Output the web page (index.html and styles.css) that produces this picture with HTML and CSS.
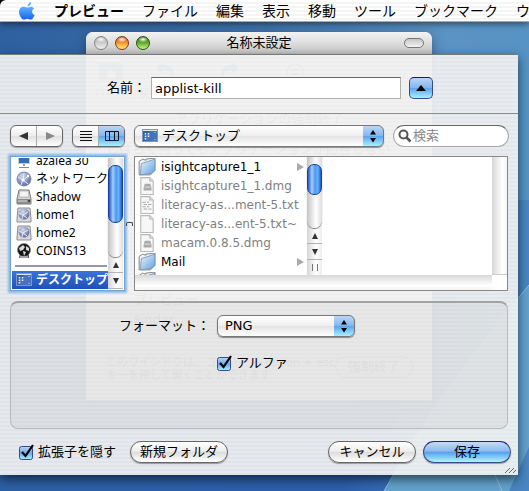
FILE: index.html
```
<!doctype html>
<html lang="ja">
  <head>
    <meta charset="UTF-8" />
    <meta name="viewport" content="width=device-width, initial-scale=1.0" />
    <title>名称未設定</title>
    <link rel="stylesheet" href="styles.css">
  </head>
  <body>
    <!-- shared icons -->
    <svg class="sprite" aria-hidden="true">
      <defs>
        <linearGradient id="g-folder" x1="0" y1="0" x2="1" y2="1">
          <stop offset="0" stop-color="#eef7ff" />
          <stop offset="1" stop-color="#5f9fdf" />
        </linearGradient>
        <linearGradient id="g-apple" x1="0" y1="0" x2="0" y2="1">
          <stop offset="0" stop-color="#63b4ff" />
          <stop offset="1" stop-color="#1464f0" />
        </linearGradient>
        <radialGradient id="g-globe" cx=".4" cy=".3" r=".8">
          <stop offset="0" stop-color="#d5dcf0" />
          <stop offset="1" stop-color="#4c5c90" />
        </radialGradient>
      </defs>
      <symbol id="i-globe" viewBox="0 0 16 16">
        <circle cx="8" cy="8" r="7" fill="url(#g-globe)" stroke="#8089a8" />
        <path d="M2 6l5 3 6-4M7 9l-2 5M7 9l5 4M8 2L7 9" stroke="#e8ecf8" fill="none" />
        <circle cx="7" cy="9" r="1.5" fill="#fff" />
        <circle cx="12" cy="5" r="1.2" fill="#fff" />
      </symbol>
      <symbol id="i-netdisk" viewBox="0 0 16 16">
        <path d="M2 1h12l1 11v3H1v-3z" fill="#d9d9dc" stroke="#8c8c90" />
        <circle cx="8" cy="7" r="5.5" fill="url(#g-globe)" />
        <path d="M3 6l4 2 5-3M7 8l-1 4M7 8l4 3" stroke="#e8ecf8" fill="none" />
      </symbol>
      <symbol id="i-disk" viewBox="0 0 16 16">
        <path d="M3 1h10l2 9v5H1v-5z" fill="#d4d4d4" stroke="#777" />
        <path d="M4 2h8l1 6H3z" fill="#f4f4f4" stroke="#aaa" stroke-width=".7" />
        <path d="M1 10h14v5H1z" fill="#8b8b8b" />
        <path d="M2 12h9" stroke="#ddd" />
        <rect x="12" y="11" width="2" height="2" fill="#444" />
      </symbol>
      <symbol id="i-coins" viewBox="0 0 16 16">
        <path d="M4 10h9v5H3z" fill="#555" />
        <circle cx="8" cy="7" r="6.5" fill="#161616" stroke="#777" stroke-width=".6" />
        <path d="M3 5l4-3 2 2-2 3-3 1zM10 3l3 2v3l-3-1zM7 8l3 1-2 4z" fill="#d8d8d8" />
        <path d="M4 14h8" stroke="#eee" />
      </symbol>
      <symbol id="i-imac" viewBox="0 0 16 16">
        <rect x="2.500" y="1.500" width="11" height="9" fill="#2f6fc0" stroke="#c9c9c9" />
        <path d="M3 3h10" stroke="#76a9e4" />
        <path d="M7 11h2v2H7z" fill="#999" />
        <path d="M3 14.500h10" stroke="#888" />
      </symbol>
      <symbol id="i-desktop" viewBox="0 0 16 14">
        <rect x=".5" y=".5" width="15" height="12" fill="#3560a8" stroke="#8397b8" />
        <path d="M1 10l8-9h6v11H6z" fill="#5583c4" opacity=".55" />
        <path d="M1 1.500h14" stroke="#dfe6f2" />
        <path d="M3.500 4v7M6.500 4v5" stroke="#e8eefa" stroke-width="1.500" stroke-dasharray="1.500 1" />
        <path d="M13 3v1M13 10v1" stroke="#c7d5ef" />
      </symbol>
      <symbol id="i-folder" viewBox="1 1 16 16">
        <path d="M2 4l3-2 3 1v-1l8-1v11l-4 4H2z" fill="#f2f2f2" stroke="#777" stroke-width=".8" />
        <path d="M4 6l12-4v10l-3 3-10 1z" fill="url(#g-folder)" stroke="#6f8fae" stroke-width=".7" />
      </symbol>
      <symbol id="i-file" viewBox="1 1 16 16">
        <path d="M3.500 1.500h8l3 3v12h-11z" fill="#f7f7f7" stroke="#b8b8b8" />
        <path d="M11.500 1.500v3h3" fill="#e2e2e2" stroke="#b8b8b8" />
      </symbol>
      <symbol id="i-text" viewBox="1 1 16 16">
        <path d="M3.500 1.500h8l3 3v12h-11z" fill="#f7f7f7" stroke="#b8b8b8" />
        <path d="M11.500 1.500v3h3" fill="#e2e2e2" stroke="#b8b8b8" />
        <path d="M5 6.500h6M6 8.500h7M5 10.500h6M6 12.500h7" stroke="#aaa" stroke-dasharray="3 1" />
      </symbol>
      <symbol id="i-dmg" viewBox="1 1 16 16">
        <path d="M3.500 1.500h8l3 3v12h-11z" fill="#f7f7f7" stroke="#b8b8b8" />
        <path d="M11.500 1.500v3h3" fill="#e2e2e2" stroke="#b8b8b8" />
        <path d="M7 7h5l1 4v2H6v-2z" fill="#aaa" />
        <path d="M7 10h5" stroke="#ddd" />
      </symbol>
    </svg>

    <div class="desktop">
      <svg class="wallpaper" viewBox="0 0 529 491" preserveAspectRatio="none" aria-hidden="true">
        <defs>
          <linearGradient id="g-sky" x1="0" y1="0" x2="1" y2="0">
            <stop offset="0" stop-color="#2e5f9f" />
            <stop offset=".5" stop-color="#3f74ad" />
            <stop offset=".85" stop-color="#5a93c4" />
            <stop offset="1" stop-color="#5793c4" />
          </linearGradient>
          <linearGradient id="g-low" x1="0" y1="0" x2="1" y2="0">
            <stop offset="0" stop-color="#2c5fa4" />
            <stop offset=".65" stop-color="#2c5fab" />
            <stop offset=".85" stop-color="#3d78b8" />
            <stop offset="1" stop-color="#4a86c2" />
          </linearGradient>
        </defs>
        <rect width="529" height="491" fill="url(#g-sky)" />
        <rect y="200" width="529" height="291" fill="url(#g-low)" />
        <path d="M384 491Q440 390 529 285V447L509 491z" fill="#62a2cd" />
        <path d="M384 491Q440 390 529 285M502 491l-9-20" fill="none" stroke="#8fbde0" />
        <rect width="6" height="6" />
      </svg>

      <nav class="menubar">
        <a class="menu-apple" href="#" aria-label="Apple">
          <svg width="18" height="20" viewBox="0 0 18 20">
            <path d="M9.500 5.500c.3-2.500 1.600-4 3.500-4.500.2 2.500-1.200 4.200-3.500 4.500z" fill="#63b4ff" />
            <path d="M9.200 6.500c1.200 0 2-.8 3.600-.8 1.400 0 2.500.7 3.200 1.700-2.800 1.700-2.400 5.400.6 6.600-.7 2-2.100 4.600-3.900 4.600-1.300 0-1.700-.8-3.300-.8s-2.100.8-3.300.8C3.900 18.600 1 14.300 1 10.900c0-3.300 2.100-5.100 4.300-5.100 1.600 0 2.600.7 3.900.7z" fill="url(#g-apple)" />
          </svg>
        </a>
        <a class="menu-app" href="#">プレビュー</a>
        <a href="#">ファイル</a>
        <a href="#">編集</a>
        <a href="#">表示</a>
        <a href="#">移動</a>
        <a href="#">ツール</a>
        <a href="#">ブックマーク</a>
        <a href="#">ウインドウ</a>
      </nav>

      <section class="window">
        <header class="titlebar">
          <span class="light"></span>
          <span class="light light-orange"></span>
          <span class="light light-green"></span>
          <h1>名称未設定</h1>
          <span class="pill"></span>
        </header>
        <div class="window-tools">
          <span class="tool"><svg width="28" height="28" viewBox="0 0 28 28"><path d="M2 5h24v18H2z" fill="#9ab" /><path d="M10 20c0-10 9-10 9 0z" fill="#fff" /></svg>パネル</span>
          <span class="tool"><svg width="28" height="28" viewBox="0 0 28 28"><path d="M10 4L3 10l7 6v-4c6 0 9 3 9 8 4-8 0-13-9-13z" fill="#789" /></svg>反時計回り</span>
          <span class="tool"><svg width="28" height="28" viewBox="0 0 28 28"><path d="M18 4l7 6-7 6v-4c-6 0-9 3-9 8-4-8 0-13 9-13z" fill="#789" /></svg>時計回り</span>
          <span class="tool"><svg width="28" height="28" viewBox="0 0 28 28"><circle cx="14" cy="14" r="8" fill="none" stroke="#aaa" stroke-width="2" /><path d="M10 12h8M10 16h8" stroke="#999" stroke-width="2" /></svg>実際のサイズ</span>
        </div>
        <div class="quit">
          <p class="quit-title">アプリケーションの強制終了</p>
          <p class="quit-note">しばらく待ってもアプリケーションが応答しない<br>場合は、強制終了してください。</p>
          <ul class="quit-apps">
            <li>プレビュー</li>
            <li>Finder</li>
          </ul>
          <div class="quit-foot">
            <p>このウインドウは、コマンド + option + esc<br>キーを押して開くことができます</p>
            <span class="quit-button">強制終了</span>
          </div>
        </div>
      </section>

      <form class="sheet">
        <div class="name-row">
          <label for="name">名前：</label>
          <input type="text" id="name" value="applist-kill" />
          <button type="button" class="square" aria-label="たたむ">
            <svg width="12" height="8" viewBox="0 0 12 8"><path d="M6 1l5 6H1z" /></svg>
          </button>
        </div>

        <div class="toolbar">
          <div class="segments">
            <button type="button" aria-label="戻る"><svg width="10" height="10" viewBox="0 0 10 10"><path d="M0 5l9-4v8z" fill="#333" /></svg></button>
            <button type="button" aria-label="進む"><svg width="10" height="10" viewBox="0 0 10 10"><path d="M10 5L1 1v8z" fill="#888" /></svg></button>
          </div>
          <div class="segments">
            <button type="button" aria-label="リスト"><svg width="12" height="12" viewBox="0 0 12 12"><path d="M0 1.500h12M0 4.500h12M0 7.500h12M0 10.500h12" stroke="#111" /></svg></button>
            <button type="button" class="on" aria-label="カラム"><svg width="14" height="12" viewBox="0 0 14 12"><path d="M.5 1.500h13v9H.5zM4.500 1v10M9.500 1v10" fill="none" stroke="#111" /></svg></button>
          </div>
          <div class="popup place">
            <svg class="popup-icon" width="16" height="14"><use href="#i-desktop" /></svg>
            <select aria-label="場所"><option>デスクトップ</option></select>
          </div>
          <label class="search">
            <svg width="14" height="14" viewBox="0 0 14 14"><circle cx="5.500" cy="5.500" r="4" fill="none" stroke="#555" stroke-width="2" /><path d="M8.500 8.500l4 4" stroke="#555" stroke-width="2.500" /></svg>
            <input type="search" placeholder="検索" aria-label="検索" />
          </label>
        </div>

        <div class="browser">
          <div class="sidebar">
            <div class="places">
              <button type="button"><svg width="16" height="16"><use href="#i-imac" /></svg>azalea 30</button>
              <button type="button"><svg width="16" height="16"><use href="#i-globe" /></svg>ネットワーク</button>
              <button type="button"><svg width="16" height="16"><use href="#i-disk" /></svg>Shadow</button>
              <button type="button"><svg width="16" height="16"><use href="#i-netdisk" /></svg>home1</button>
              <button type="button"><svg width="16" height="16"><use href="#i-netdisk" /></svg>home2</button>
              <button type="button"><svg width="16" height="16"><use href="#i-coins" /></svg>COINS13</button>
              <hr>
              <button type="button" class="selected"><svg width="16" height="14"><use href="#i-desktop" /></svg>デスクトップ</button>
            </div>
            <div class="scroll">
              <div class="track"><div class="thumb"></div></div>
              <button type="button" aria-label="上へ"><svg width="8" height="8" viewBox="0 0 8 8"><path d="M4 1l3 6H1z" /></svg></button>
              <button type="button" aria-label="下へ"><svg width="8" height="8" viewBox="0 0 8 8"><path d="M4 7l3-6H1z" /></svg></button>
            </div>
          </div>

          <div class="splitter"></div>

          <div class="columns">
            <div class="column">
              <div class="files">
                <button type="button"><svg width="18" height="18"><use href="#i-folder" /></svg>isightcapture1_1<i></i></button>
                <button type="button" disabled><svg width="18" height="18"><use href="#i-dmg" /></svg>isightcapture1_1.dmg</button>
                <button type="button" disabled><svg width="18" height="18"><use href="#i-text" /></svg>literacy-as...ment-5.txt</button>
                <button type="button" disabled><svg width="18" height="18"><use href="#i-file" /></svg>literacy-as...ent-5.txt~</button>
                <button type="button" disabled><svg width="18" height="18"><use href="#i-dmg" /></svg>macam.0.8.5.dmg</button>
                <button type="button"><svg width="18" height="18"><use href="#i-folder" /></svg>Mail<i></i></button>
                <button type="button" aria-label="フォルダ"><svg width="18" height="18"><use href="#i-folder" /></svg></button>
              </div>
              <div class="scroll">
                <div class="track"><div class="thumb"></div></div>
                <button type="button" aria-label="上へ"><svg width="8" height="8" viewBox="0 0 8 8"><path d="M4 1l3 6H1z" /></svg></button>
                <button type="button" aria-label="下へ"><svg width="8" height="8" viewBox="0 0 8 8"><path d="M4 7l3-6H1z" /></svg></button>
                <div class="grip"></div>
              </div>
            </div>
            <div class="empty"></div>
            <div class="vtrack"></div>
            <div class="htrack"></div>
            <div class="corner"></div>
          </div>
        </div>

        <div class="options">
          <label for="format">フォーマット：</label>
          <div class="popup">
            <select id="format"><option>PNG</option></select>
          </div>
          <label class="check alpha"><input type="checkbox" checked />アルファ</label>
        </div>

        <div class="actions">
          <label class="check"><input type="checkbox" checked />拡張子を隠す</label>
          <button type="button" class="push new-folder">新規フォルダ</button>
          <button type="button" class="push cancel">キャンセル</button>
          <button type="submit" class="push default">保存</button>
        </div>

        <svg class="resize" width="12" height="8" viewBox="0 0 12 8" aria-hidden="true">
          <path d="M0 6l5-5M4 6l5-5M8 6l3-3" stroke="#666" fill="none" />
        </svg>
      </form>
    </div>
  </body>
</html>
```
FILE: styles.css
```
* {
  box-sizing: border-box;
}
body {
  margin: 0;
  font-family: "DejaVu Sans", "Noto Sans CJK JP", sans-serif;
  font-size: 13px;
  line-height: 18px;
  color: #000;
}
p, ul, h1 {
  margin: 0;
  padding: 0;
  list-style: none;
}
button, input, select {
  font: inherit;
  color: inherit;
  margin: 0;
}
button {
  padding: 0;
  border: none;
  background: none;
}
svg {
  flex: none;
}
.sprite {
  display: block;
  width: 0;
  height: 0;
}
.desktop {
  position: relative;
  min-height: 100vh;
  padding: 0 11px 16px 0;
  overflow: hidden;
}
.wallpaper {
  position: absolute;
  inset: 0;
  width: 100%;
  height: 100%;
}

/* menu bar */
.menubar {
  position: relative;
  display: flex;
  align-items: center;
  gap: 18px;
  height: 22px;
  margin-right: -11px;
  padding-left: 18px;
  overflow: hidden;
  white-space: nowrap;
  font-size: 14px;
  background: repeating-linear-gradient(#fff 0 2px, #f5f5f5 2px 4px);
  border-bottom: 1px solid #a9a9a9;
  border-top-left-radius: 6px;
  box-shadow: 0 2px 6px rgba(0, 0, 0, 0.5);
}
.menubar a {
  color: #000;
  text-decoration: none;
}
.menubar svg {
  display: block;
}
.menu-app {
  font-weight: bold;
}

/* window behind the sheet */
.window {
  position: absolute;
  top: 32px;
  left: 86px;
  right: 97px;
  height: 368px;
  background: #f2f2f2;
  border-radius: 7px 7px 0 0;
  box-shadow: 0 4px 12px rgba(0, 0, 0, 0.35);
}
.titlebar {
  display: flex;
  align-items: center;
  gap: 7px;
  height: 22px;
  padding: 0 8px;
  border-radius: 7px 7px 0 0;
  background: linear-gradient(#f3f3f3, #d9d9d9 60%, #c4c4c4);
}
.titlebar h1 {
  flex: 1;
  font-size: 13px;
  font-weight: normal;
  text-align: center;
}
.light {
  width: 14px;
  height: 14px;
  border: 1px solid #858585;
  border-radius: 50%;
  background: radial-gradient(ellipse 5px 3px at 50% 20%, #fff, transparent), linear-gradient(#aaa, #f2f2f2);
}
.light-orange {
  border-color: #7c3a20;
  background: radial-gradient(ellipse 5px 3px at 50% 20%, #fff, transparent), linear-gradient(#b8481c, #f79a2c 50%, #ffee80);
}
.light-green {
  border-color: #2a5420;
  background: radial-gradient(ellipse 5px 3px at 50% 20%, #fff, transparent), linear-gradient(#2c6a18, #62b02c 50%, #cdf480);
}
.pill {
  width: 20px;
  height: 10px;
  margin-left: 36px;
  border: 1px solid #777;
  border-radius: 5px;
  background: linear-gradient(#c4c4c4, #f4f4f4);
}
.window-tools {
  display: flex;
  gap: 12px;
  height: 55px;
  padding: 4px 8px;
  color: #666;
  font-size: 11px;
  line-height: 16px;
}
.tool {
  display: flex;
  flex-direction: column;
  align-items: center;
}
.quit {
  height: 291px;
  padding: 0 20px;
  border-top: 1px solid #ddd;
  border-radius: 6px 6px 0 0;
  color: #666;
}
.quit-title {
  text-align: center;
}
.quit-note {
  padding-top: 12px;
  white-space: nowrap;
}
.quit-apps {
  height: 180px;
  padding: 114px 28px 0;
  line-height: 20px;
}
.quit-foot {
  display: flex;
  justify-content: space-between;
  font-size: 11px;
  line-height: 13px;
  white-space: nowrap;
}
.quit-button {
  height: 22px;
  padding: 3px 12px;
  border: 1px solid #888;
  border-radius: 11px;
  font-size: 13px;
}

/* save sheet */
.sheet {
  position: relative;
  margin-top: 32px;
  border-top: 1px solid #777;
  background:
    repeating-linear-gradient(rgba(255, 255, 255, 0.2) 0 2px, transparent 2px 4px),
    rgba(238, 238, 238, 0.93);
  box-shadow: 0 4px 10px rgba(0, 0, 0, 0.6);
}
.name-row {
  display: flex;
  align-items: center;
  padding: 22px 85px 14px 107px;
  border-bottom: 1px solid #8b8b8b;
}
.name-row input {
  flex: 1;
  min-width: 0;
  height: 22px;
  margin: 0 8px 0 5px;
  padding: 0 3px;
  border: 1px solid #b0b0b0;
  border-top-color: #666;
  background: #fff;
  outline: none;
}
.square {
  display: grid;
  place-items: center;
  width: 24px;
  height: 22px;
  border: 1px solid #3b4a86;
  border-top-color: #14147c;
  border-radius: 5px;
  background: linear-gradient(#bcd6f4, #86b6ee 48%, #5ea4ee 52%, #a8f0ff);
}
.toolbar {
  display: flex;
  gap: 9px;
  padding: 11px 9px 9px 10px;
}
.segments {
  display: flex;
  width: 53px;
  height: 22px;
  border: 1px solid #666;
  border-radius: 6px;
  overflow: hidden;
  background: linear-gradient(#fff, #eee 48%, #e0e0e0 52%, #fff);
  box-shadow: 0 1px 1px rgba(0, 0, 0, 0.3);
}
.segments button {
  flex: 1;
  display: grid;
  place-items: center;
}
.segments button + button {
  border-left: 1px solid #aaa;
}
.segments .on {
  background: linear-gradient(#bcd6f4, #86b6ee 48%, #5ea4ee 52%, #a8f0ff);
}
.popup {
  display: grid;
  align-items: center;
  height: 22px;
  border: 1px solid #777;
  border-radius: 6px;
  overflow: hidden;
  background:
    url("data:image/svg+xml,%3Csvg xmlns='http://www.w3.org/2000/svg' width='20' height='20'%3E%3Cpath d='M7 8.500l3-4.500 3 4.500zM7 12l3 4.500 3-4.500z'/%3E%3C/svg%3E") right center no-repeat,
    linear-gradient(#bcd6f4, #86b6ee 48%, #5ea4ee 52%, #a8f0ff) right / 20px 100% no-repeat,
    linear-gradient(#fff, #efefef 48%, #e4e4e4 52%, #fff);
  box-shadow: 0 1px 1px rgba(0, 0, 0, 0.4);
}
.popup select {
  grid-area: 1 / 1;
  width: 100%;
  height: 20px;
  padding: 0 24px 0 7px;
  border: none;
  background: none;
  appearance: none;
  outline: none;
}
.popup-icon {
  grid-area: 1 / 1;
  margin-left: 7px;
}
.place {
  flex: 1;
}
.place select {
  padding-left: 27px;
}
.search {
  display: flex;
  align-items: center;
  gap: 1px;
  width: 116px;
  height: 22px;
  padding: 0 4px;
  border: 1px solid #aaa;
  border-top-color: #666;
  border-radius: 11px;
  background: #fff;
}
.search input {
  flex: 1;
  min-width: 0;
  padding: 0;
  border: none;
  background: none;
  outline: none;
}
.search input::placeholder {
  color: #888;
}

/* file browser */
.browser {
  display: flex;
  height: 135px;
  padding: 0 10px;
}
.sidebar {
  display: flex;
  width: 115px;
  padding: 1px;
  background: #fff;
  border: 1px solid #6fa3d8;
  box-shadow: 0 0 2px 2px #8db9e6;
}
.places {
  flex: 1;
  display: flex;
  flex-direction: column;
  justify-content: flex-end;
  min-width: 0;
  overflow: hidden;
}
.places button {
  flex: none;
  display: flex;
  align-items: center;
  gap: 4px;
  height: 18px;
  padding-left: 4px;
  font-family: "Noto Sans", "Noto Sans CJK JP", sans-serif;
  font-size: 12px;
  white-space: nowrap;
}
.places hr {
  flex: none;
  width: 92px;
  height: 2px;
  margin: 5px 3px 4px;
  border: none;
  background: #999;
}
.places .selected {
  color: #fff;
  font-weight: bold;
  background: linear-gradient(#3b74d8, #1e50b8);
}
.scroll {
  display: flex;
  flex-direction: column;
  width: 15px;
  background: linear-gradient(90deg, #d6d6d6, #fff 60%, #eee);
}
.track {
  flex: 1;
  padding: 7px 0;
  border-radius: 0 0 8px 8px;
  background: linear-gradient(90deg, #c4c4c4, #fff 60%, #ddd);
  box-shadow: 0 1px 1px #777;
}
.thumb {
  height: 58px;
  border: 1px solid #1b3f9c;
  border-radius: 7px;
  background: linear-gradient(90deg, #1c55c8, #a4cdfa 30%, #4c98f0 55%, #66b4fa 75%, #1c55c8);
}
.scroll button {
  display: grid;
  place-items: center;
  height: 16px;
  border-bottom: 1px solid #b4b4b4;
  fill: #333;
}
.splitter {
  width: 9px;
  display: grid;
  place-items: center;
}
.splitter::before {
  content: "";
  width: 5px;
  height: 3px;
  border: 1px solid #444;
  border-bottom: none;
  border-radius: 2px 2px 0 0;
}
.columns {
  flex: 1;
  display: grid;
  grid-template: 1fr 15px / 187px 1fr 15px;
  min-width: 0;
  border: 1px solid #888;
  background: #fff;
}
.column {
  display: flex;
  height: 118px;
}
.files {
  flex: 1;
  min-width: 0;
  overflow: hidden;
}
.files button {
  display: flex;
  align-items: center;
  gap: 5px;
  width: 100%;
  height: 19px;
  padding: 0 3px;
  font-size: 12px;
  white-space: nowrap;
}
.files button:disabled {
  color: #808080;
}
.files i {
  margin-left: auto;
  border: 4px solid transparent;
  border-left: 7px solid #aaa;
  border-right: none;
}
.column .thumb {
  height: 31px;
}
.grip {
  height: 15px;
  padding: 4px 5px;
}
.grip::before {
  content: "";
  display: block;
  width: 4px;
  height: 7px;
  border: 1px solid #777;
  border-width: 0 1px;
}
.vtrack {
  border-bottom: 1px solid #ccc;
  background: linear-gradient(90deg, #d8d8d8, #fff 70%, #f4f4f4);
}
.htrack {
  grid-column: 1 / 3;
  background: linear-gradient(#d8d8d8, #fff 70%, #f4f4f4);
}

/* options and buttons */
.options {
  display: grid;
  grid-template-columns: 199px 138px;
  grid-auto-rows: 22px;
  align-items: center;
  align-content: start;
  gap: 15px 7px;
  height: 128px;
  margin: 10px 10px 0;
  padding-top: 12px;
  border: 1px solid #b8babc;
  border-top: 2px solid #a0a2a4;
  border-radius: 8px;
  background: rgba(0, 0, 0, 0.04);
}
.options > label:first-child {
  text-align: right;
}
.check {
  display: flex;
  align-items: center;
  gap: 3px;
}
.check input {
  width: 16px;
  height: 16px;
  appearance: none;
  background: url("data:image/svg+xml,%3Csvg xmlns='http://www.w3.org/2000/svg' width='16' height='16'%3E%3Cdefs%3E%3ClinearGradient id='a' x2='0' y2='1'%3E%3Cstop stop-color='%23bcd6f4'/%3E%3Cstop offset='.5' stop-color='%2369a9ee'/%3E%3Cstop offset='1' stop-color='%23a8f0ff'/%3E%3C/linearGradient%3E%3C/defs%3E%3Crect x='.5' y='2.500' width='13' height='13' rx='2' fill='url(%23a)' stroke='%233b4a86'/%3E%3Cpath d='M3 8l3.500 4L14 1' fill='none' stroke='%23000' stroke-width='2.200'/%3E%3C/svg%3E") no-repeat;
}
.alpha {
  grid-column: 2;
}
.actions {
  display: flex;
  align-items: center;
  padding: 12px 7px 12px 19px;
}
.push {
  height: 22px;
  border: 1px solid #666;
  border-radius: 11px;
  background: linear-gradient(#fff, #eee 45%, #ddd 52%, #fff);
  box-shadow: 0 1px 1px rgba(0, 0, 0, 0.35);
}
.new-folder {
  width: 98px;
  margin-left: 14px;
}
.cancel {
  width: 88px;
  margin: 0 7px 0 auto;
}
.default {
  width: 88px;
  border-color: #3b4a86;
  border-top-color: #241a94;
  background: linear-gradient(#c4dcf6, #8cbaf0 45%, #5aa0ee 52%, #b0f4ff);
}
.resize {
  position: absolute;
  right: 1px;
  bottom: 0;
}
```
